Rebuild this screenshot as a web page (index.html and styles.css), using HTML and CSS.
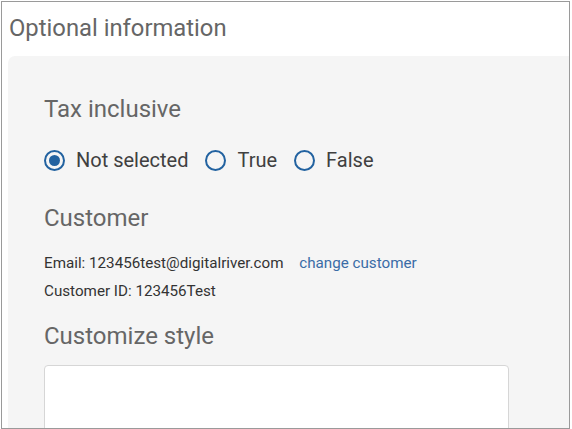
FILE: index.html
```html
<!DOCTYPE html>
<html lang="en">
<head>
<meta charset="utf-8">
<title>Optional information</title>
<link rel="stylesheet" href="styles.css">
</head>
<body>
<div class="frame">
  <h1 class="title">Optional information</h1>
  <div class="panel">
    <h2 class="heading">Tax inclusive</h2>
    <div class="radios">
      <label class="option"><span class="radio checked"></span><span class="opt-label">Not selected</span></label>
      <label class="option"><span class="radio"></span><span class="opt-label">True</span></label>
      <label class="option"><span class="radio"></span><span class="opt-label">False</span></label>
    </div>
    <h2 class="heading customer-heading">Customer</h2>
    <div class="info">
      <p class="info-line">Email: 123456test@digitalriver.com <a class="link" href="#">change customer</a></p>
      <p class="info-line">Customer ID: 123456Test</p>
    </div>
    <h2 class="heading style-heading">Customize style</h2>
    <div class="textarea"></div>
  </div>
</div>
</body>
</html>
```

FILE: styles.css
```css
html, body {
  margin: 0;
  padding: 0;
  background: #ffffff;
}

body {
  font-family: Roboto, "Liberation Sans", Arial, sans-serif;
}

.frame {
  margin: 1px 0 0 1px;
  width: 569px;
  height: 428px;
  box-sizing: border-box;
  border: 1px solid #9a9a9a;
  overflow: hidden;
  background: #ffffff;
}

.title {
  margin: 0;
  padding: 12px 0 0 7px;
  font-size: 23.8px;
  line-height: 28px;
  font-weight: 400;
  color: #666666;
  height: 42px;
  box-sizing: content-box;
}

.panel {
  margin-left: 6px;
  background: #f5f5f5;
  border-top-left-radius: 7px;
  padding: 39px 0 0 36px;
  height: 400px;
}

.heading {
  margin: 0;
  font-size: 24px;
  line-height: 28px;
  font-weight: 400;
  color: #666666;
}

.radios {
  display: flex;
  align-items: center;
  gap: 17px;
  margin-top: 25px;
  height: 24px;
}

.option {
  display: flex;
  align-items: center;
  gap: 11px;
}

.radio {
  width: 21px;
  height: 21px;
  box-sizing: border-box;
  border: 2px solid #2262a0;
  border-radius: 50%;
  display: flex;
  align-items: center;
  justify-content: center;
}

.radio.checked::after {
  content: "";
  width: 11px;
  height: 11px;
  border-radius: 50%;
  background: #2262a0;
}

.opt-label {
  font-size: 20px;
  line-height: 24px;
  color: #404040;
}

.customer-heading {
  margin-top: 32px;
}

.info {
  margin-top: 17px;
}

.info-line {
  margin: 0;
  font-size: 15.2px;
  line-height: 28px;
  color: #333333;
}

.link {
  color: #3a6ca6;
  text-decoration: none;
  margin-left: 12px;
}

.style-heading {
  margin-top: 17px;
}

.textarea {
  margin-top: 15px;
  width: 465px;
  height: 120px;
  box-sizing: border-box;
  background: #ffffff;
  border: 1px solid #d6d6d6;
  border-radius: 4px;
}
```
